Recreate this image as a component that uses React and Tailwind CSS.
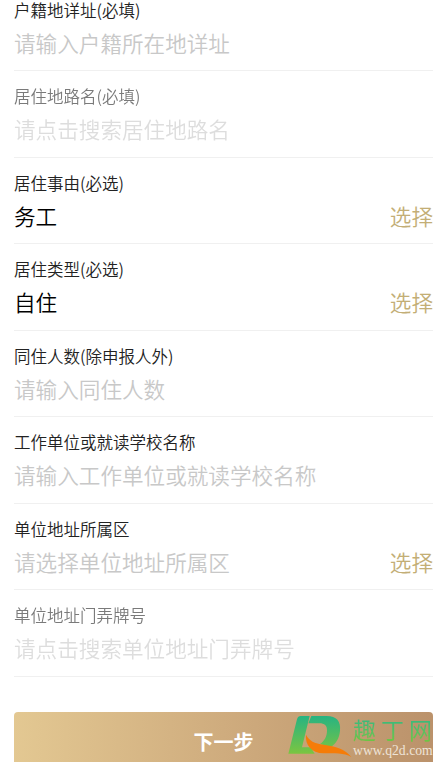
import React from 'react';

const fields = [
    { label: '户籍地详址(必填)', placeholder: '请输入户籍所在地详址' },
    { label: '居住地路名(必填)', placeholder: '请点击搜索居住地路名', disabled: true },
    { label: '居住事由(必选)', value: '务工', select: true },
    { label: '居住类型(必选)', value: '自住', select: true },
    { label: '同住人数(除申报人外)', placeholder: '请输入同住人数' },
    { label: '工作单位或就读学校名称', placeholder: '请输入工作单位或就读学校名称' },
    { label: '单位地址所属区', placeholder: '请选择单位地址所属区', select: true },
    { label: '单位地址门弄牌号', placeholder: '请点击搜索单位地址门弄牌号', disabled: true },
];

const Field = ({ label, placeholder, value, select, disabled }) => (
    <div className="h-[86.5px] shrink-0 border-b border-[#f0f0f0] pt-[15px]">
        <div className={disabled ? 'opacity-60' : ''}>
            <p className="text-[16.5px] leading-[20px] font-[350] text-[#222]">{label}</p>
            <div className="mt-[7px] flex justify-between text-[21.6px] leading-[32px] font-[350]">
                <span className={value ? 'text-black' : 'text-[#c8c8c8]'}>{value || placeholder}</span>
                {select && <span className="text-[#c3ae76]">选择</span>}
            </div>
        </div>
    </div>
);

const Watermark = () => (
    <div className="absolute left-[284px] top-[708px] flex">
        <svg width="70" height="54" viewBox="0 0 210 162" fill="none">
            <defs>
                <linearGradient id="leaf" gradientUnits="userSpaceOnUse" x1="0" y1="22" x2="0" y2="138">
                    <stop offset="0" stopColor="#25b383" />
                    <stop offset="1" stopColor="#7cc540" />
                </linearGradient>
            </defs>
            <path d="M50 24H77L54 118H80L92 137H13L39 34Q42 24 50 24Z" fill="url(#leaf)" />
            <path d="M82 24H128C158 24 171 40 168 68C166 91 156 107 140 117L108 108C121 99 129 85 129 68C130 52 121 46 106 46H73Z" fill="url(#leaf)" />
            <path d="M66 80C76 99 91 106 119 110C155 115 183 122 202 147C179 134 153 137 119 136C82 135 63 111 66 80Z" fill="#f57c08" />
        </svg>
        <div className="-ml-px w-[79px] pt-[8px]">
            <p className="flex justify-between bg-gradient-to-b from-[#25b883] to-[#72c53c] bg-clip-text text-[23px] leading-[27px] text-transparent">
                <span>趣</span><span>丁</span><span>网</span>
            </p>
            <p className="font-['Liberation_Serif',serif] text-[13.7px] leading-[16px] text-[#eee3d7]">www.q2d.com</p>
        </div>
    </div>
);

const App = () => (
    <div className="relative h-[762px] w-[436px] overflow-hidden bg-white font-['Noto_Sans_CJK_SC',sans-serif]">
        <div className="-mt-[15.5px] flex flex-col pl-[14px] pr-[3px]">
            {fields.map((field) => (
                <Field key={field.label} {...field} />
            ))}
            <button type="button" className="mt-[35.5px] h-[60px] rounded-[4px] bg-gradient-to-r from-[#e3c892] via-[#cfac7e] to-[#bb926b] text-[20px] font-bold text-white">
                下一步
            </button>
        </div>
        <Watermark />
    </div>
);

export default App;
